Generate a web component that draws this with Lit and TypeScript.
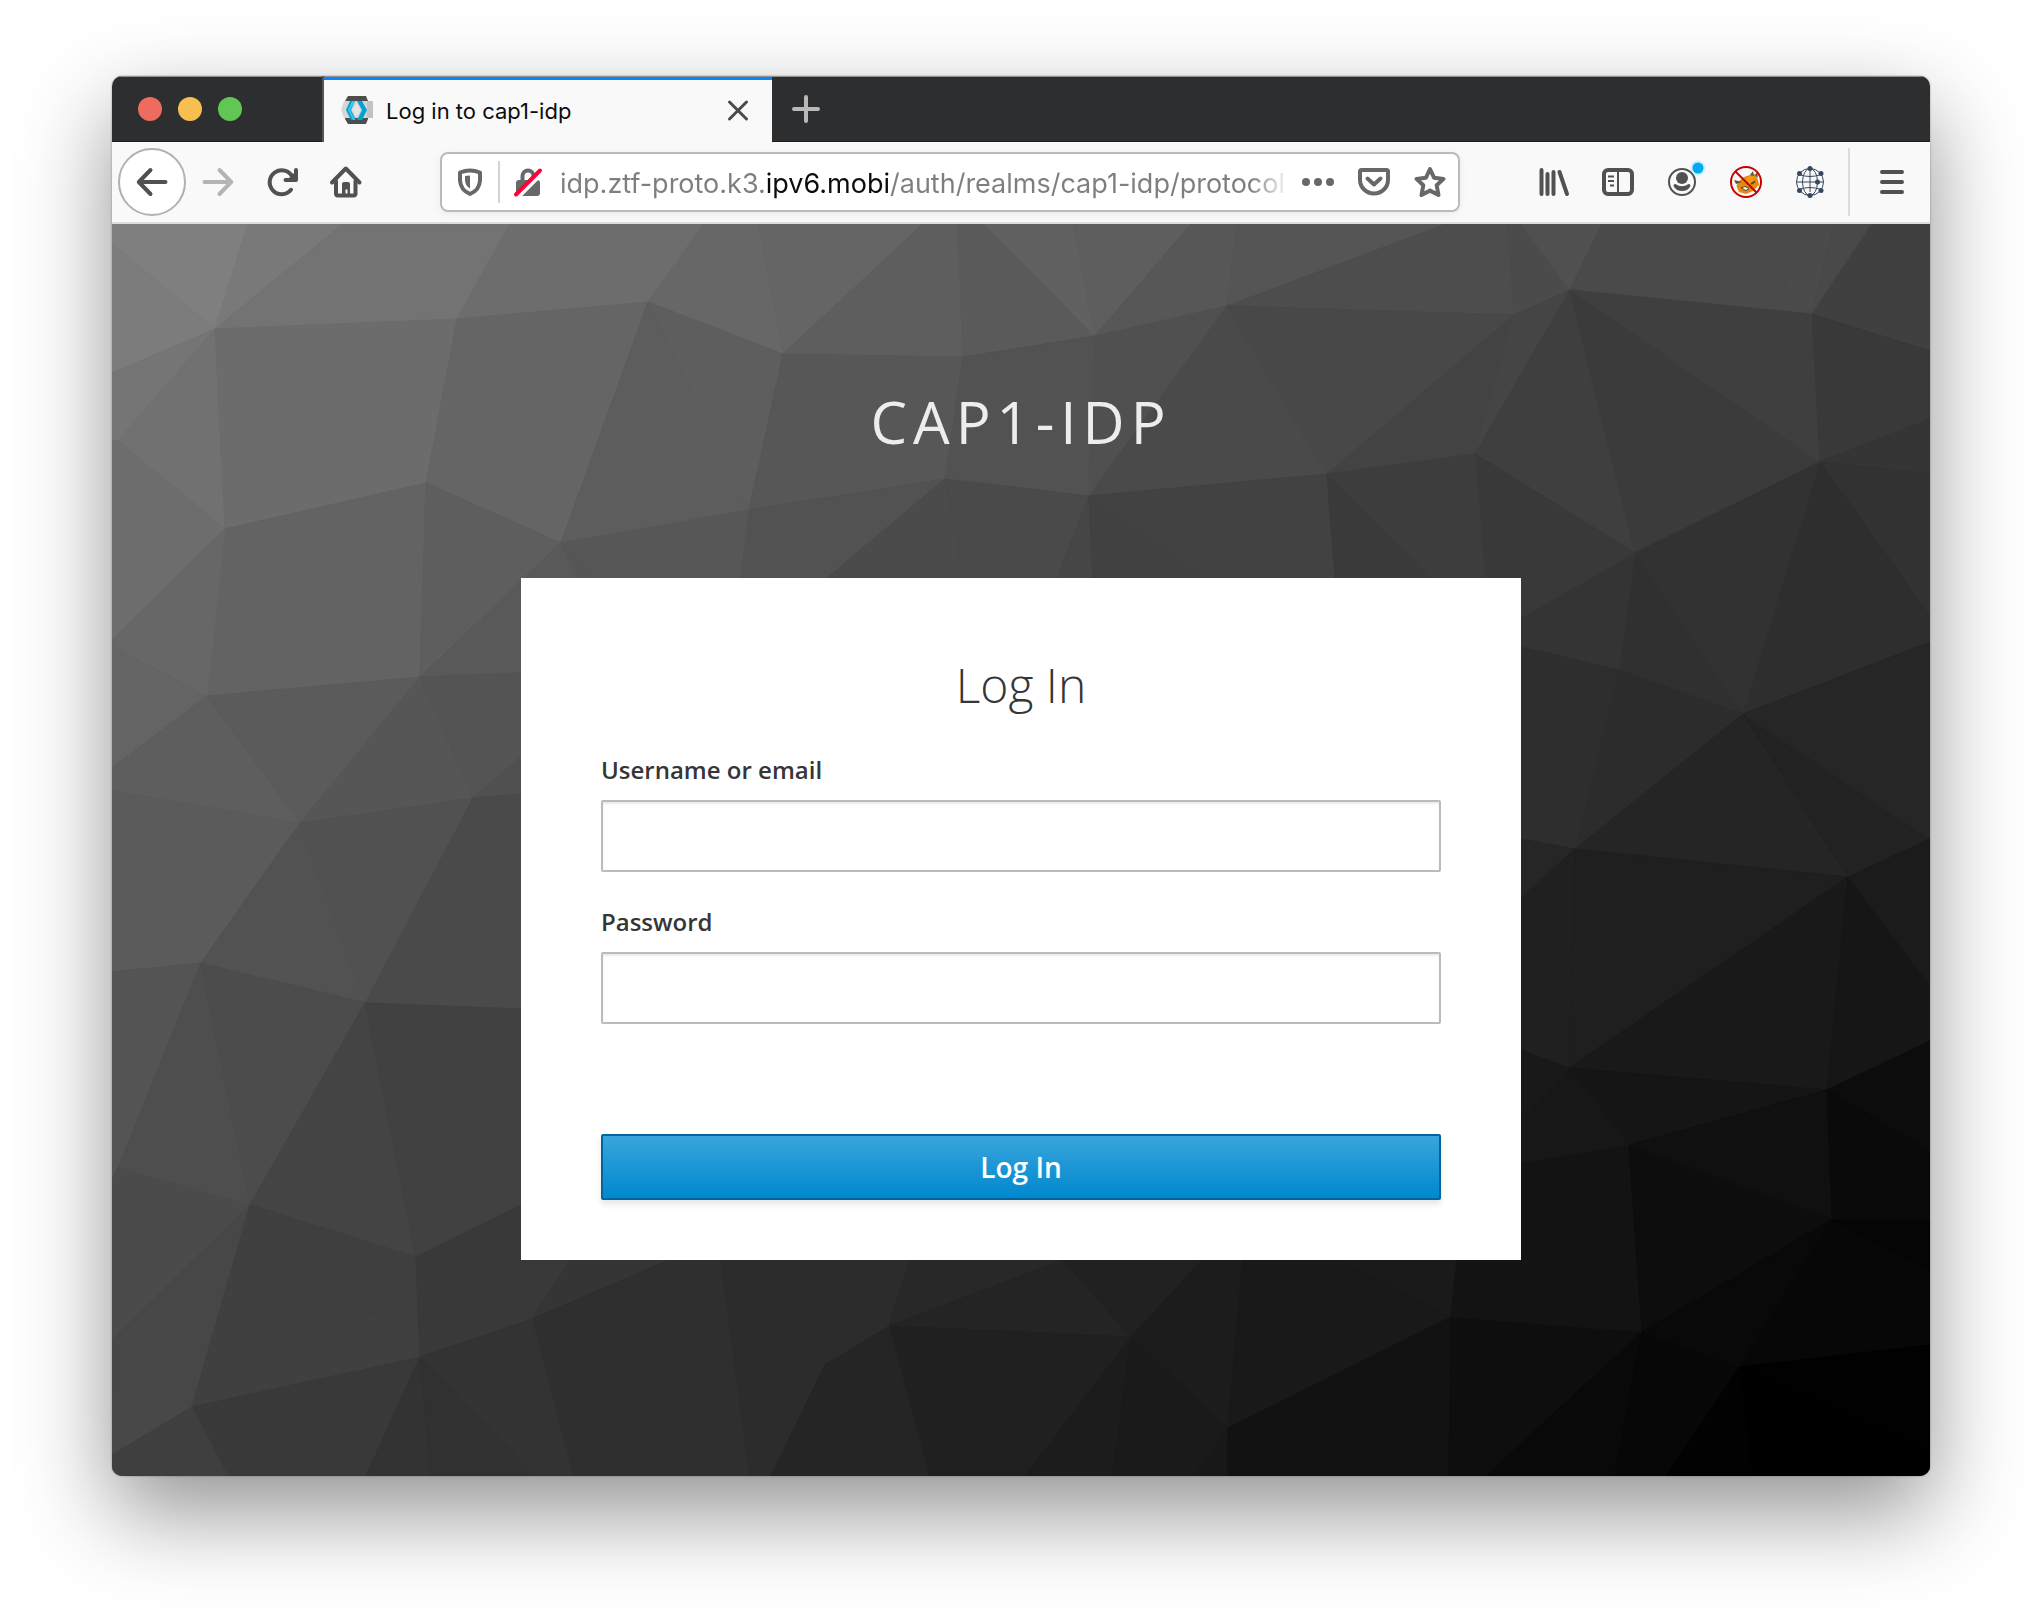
import { LitElement, html, css, svg } from "lit";
import { customElement } from "lit/decorators.js";

/* Facets of the login backdrop: grey level (hex), then the corner points. */
const FACETS = `
7f 0,0 136,0 103,105 0,20
7c 0,20 103,105 0,149
79 136,0 231,0 103,105
73 231,0 398,0 345,95 103,105
6d 398,0 592,0 536,78 345,95
67 592,0 647,0 671,130 536,78
65 647,0 811,0 671,130
5e 811,0 846,0 851,133 671,130
5a 846,0 872,0 983,112 851,133
61 872,0 961,0 983,112
5e 961,0 1079,0 983,112
57 1079,0 1125,0 1115,82 983,112
55 1125,0 1334,0 1115,82
4d 1334,0 1396,0 1402,91 1115,82
4b 1396,0 1409,0 1458,66 1402,91
50 1409,0 1490,0 1458,66
4a 1490,0 1627,0 1700,90 1458,66
4b 1627,0 1721,0 1700,90
49 1721,0 1760,0 1700,90
40 1760,0 1818,0 1818,127 1700,90
75 0,149 103,105 6,217 0,217
71 103,105 113,305 6,217
6d 0,217 6,217 113,305 0,416
6c 103,105 345,95 314,259 113,305
65 345,95 536,78 449,319 314,259
5d 536,78 637,286 449,319
5e 536,78 671,130 637,286
57 671,130 851,133 833,255 637,286
52 851,133 983,112 977,272 833,255
50 983,112 1115,82 977,272
4a 1115,82 1215,250 977,272
48 1115,82 1402,91 1215,250
43 1402,91 1363,230 1215,250
45 1402,91 1458,66 1363,230
3f 1458,66 1523,329 1363,230
3b 1458,66 1708,238 1523,329
3f 1458,66 1700,90 1708,238
39 1700,90 1818,127 1818,195 1708,238
35 1708,238 1818,195 1818,250
32 1708,238 1818,250 1818,392
2e 1708,238 1818,392 1818,418 1631,490
32 1708,238 1631,490 1523,329
30 1523,329 1631,490 1507,446
34 1523,329 1507,446 1409,423 1409,394
39 1363,230 1523,329 1409,394 1373,354
2c 1507,446 1631,490 1463,625
2e 1409,423 1507,446 1463,625 1409,615
25 1631,490 1736,653 1463,625
22 1631,490 1818,615 1736,653
26 1631,490 1818,418 1818,615
63 113,305 314,259 308,453 95,472
67 0,416 113,305 95,472 0,422
64 0,422 95,472 0,544
5e 314,259 449,319 308,453
59 308,453 449,319 464,354 409,449
56 449,319 496,354 464,354
57 449,319 637,286 629,354 496,354
52 637,286 833,255 715,354 629,354
4b 833,255 851,354 715,354
4a 833,255 977,272 945,354 851,354
46 977,272 981,354 945,354
41 977,272 1093,354 981,354
42 977,272 1215,250 1223,354 1093,354
3a 1215,250 1318,354 1223,354
3d 1215,250 1363,230 1373,354 1318,354
5e 0,544 95,472 188,599 0,567
5b 95,472 308,453 188,599
56 308,453 361,574 188,599
54 308,453 409,449 409,533 361,574
50 361,574 409,533 409,570
5b 0,567 188,599 89,739 0,748
52 188,599 253,779 89,739
51 188,599 361,574 253,779
4a 361,574 409,570 409,785 253,779
54 0,748 89,739 6,944 0,955
4e 89,739 138,981 6,944
4c 89,739 253,779 138,981
44 253,779 304,1033 138,981
41 253,779 409,785 409,981 304,1033
4b 6,944 138,981 0,1116 0,955
47 138,981 80,1183 0,1167 0,1116
48 0,1167 80,1183 0,1231
40 138,981 308,1133 80,1183
3f 138,981 304,1033 308,1133
39 304,1033 409,981 458,1036 420,1095 308,1133
35 458,1036 557,1036 420,1095
2f 557,1036 609,1036 638,1252 461,1252 420,1095
2c 609,1036 798,1036 777,1102 713,1141 659,1252 638,1252
28 798,1036 951,1036 777,1102
24 951,1036 1019,1113 777,1102
20 777,1102 1019,1113 913,1252 817,1252
25 777,1102 817,1252 659,1252 713,1141
21 951,1036 1090,1036 1019,1113
1c 1090,1036 1131,1036 1116,1204 1019,1113
19 1131,1036 1226,1036 1339,1093 1116,1204
1a 1226,1036 1345,1036 1339,1093
1c 1019,1113 1001,1252 913,1252
1a 1019,1113 1116,1204 1082,1252 1001,1252
18 1116,1204 1116,1252 1082,1252
12 1116,1204 1339,1093 1337,1252 1116,1252
0e 1339,1093 1530,1108 1374,1252 1337,1252
09 1530,1108 1503,1252 1374,1252
07 1530,1108 1628,1143 1554,1252 1503,1252
13 1345,1036 1409,939 1517,921 1530,1108 1339,1093
0d 1517,921 1720,995 1530,1108
09 1530,1108 1720,995 1628,1143
07 1628,1143 1720,995 1818,1047 1818,1121
05 1720,995 1818,995 1818,1047
01 1628,1143 1818,1121 1818,1226
00 1628,1143 1818,1226 1818,1252 1640,1252
02 1628,1143 1640,1252 1554,1252
26 1463,625 1409,674 1409,615
20 1463,625 1457,844 1409,826 1409,674
1f 1463,625 1736,653 1457,844
19 1736,653 1715,866 1457,844
16 1736,653 1818,761 1818,817 1715,866
1b 1736,653 1818,615 1818,761
15 1457,844 1715,866 1517,921
17 1457,844 1517,921 1409,939 1409,892
19 1409,826 1457,844 1409,892
10 1517,921 1715,866 1720,995
0c 1715,866 1818,817 1818,928
0a 1715,866 1818,928 1818,995 1720,995
39 80,1183 308,1133 254,1252 116,1252
33 308,1133 319,1252 254,1252
31 308,1133 424,1252 319,1252
33 308,1133 420,1095 461,1252 424,1252
3f 0,1231 80,1183 116,1252 0,1252
`
  .trim()
  .split("\n")
  .map((line) => {
    const [grey, ...points] = line.split(" ");
    return { fill: `#${grey}${grey}${grey}`, points: points.join(" ") };
  });

const icon = (body: unknown, cls = "") =>
  html`<svg class="icon ${cls}" viewBox="0 0 32 32" aria-hidden="true">${body}</svg>`;

const ICONS = {
  back: svg`<path class="ln" d="M29.5 16H3M14.5 4 2.800 16l11.700 12"/>`,
  forward: svg`<path class="ln" d="M2.5 16H29M17.5 4 29.200 16 17.500 28"/>`,
  reload: svg`<path class="ln" d="M25 23.800A12 12 0 1 1 26.500 11"/><path class="ln" d="M30 4v10H19.500"/><path class="fl" d="M21 14l9-9v9z"/>`,
  home: svg`<path class="ln" d="M2 16.500 15.800 2.500 29.500 16.500"/><path class="ln" d="M6 15v13a1.500 1.500 0 0 0 1.500 1.500h16.500a1.500 1.500 0 0 0 1.500-1.500V15"/><path class="fl" d="M12 30V18a2 2 0 0 1 2-2h4a2 2 0 0 1 2 2v12h-2.500v-6.500h-2V30z"/>`,
  shield: svg`<path class="ln" d="M6 6.500Q16 2.500 26 6.500V14.500Q25.500 24 16 28Q6.500 24 6 14.500Z"/><path class="fl" d="M16 9.500v13q-4.700-2.500-5-8.500v-4z"/>`,
  lock: svg`<path class="ln" d="M10.500 15V10a5.500 5.500 0 0 1 11 0v5"/><rect class="fl" x="4" y="14" width="24" height="16" rx="3"/><path d="M4 32 31 5" stroke="#fff" stroke-width="6"/><path d="M4 28.500 28 4.500" stroke="#ff0039" stroke-width="4" stroke-linecap="round"/>`,
  dots: svg`<circle class="fl" cx="4" cy="16" r="4"/><circle class="fl" cx="16" cy="16" r="4"/><circle class="fl" cx="28" cy="16" r="4"/>`,
  pocket: svg`<path class="ln" d="M3.500 4h25a1.500 1.500 0 0 1 1.500 1.500V14a14 13.500 0 0 1-28 0V5.500A1.500 1.500 0 0 1 3.500 4z"/><path class="ln" d="M9.500 12.500 16 18.500l6.500-6"/>`,
  star: svg`<path class="ln" d="M16 3l4 8.700 9.500 1.200-6.800 6.400 1.800 9.700L16 24.600 7.500 29l1.800-9.700L2.500 12.900l9.500-1.200z"/>`,
  library: svg`<path class="ln" d="M3.500 4v24M9.500 8v20M15.500 6v22M21.500 6l7.500 22"/>`,
  sidebar: svg`<rect class="ln" x="2" y="4" width="28" height="24" rx="4"/><path d="M16 4v24M6 10.500h6M6 15h6M8 19.500h4" fill="none" stroke="currentColor" stroke-width="2"/>`,
  account: svg`<circle cx="16" cy="16" r="13" fill="none" stroke="currentColor" stroke-width="2"/><circle class="fl" cx="16" cy="12" r="6"/><path class="fl" d="M9.500 18Q16 22.500 22.500 18q2.500 0 1.800 2.500Q21.500 25 16 25t-8.300-4.500Q7 18 9.500 18z"/><circle cx="32" cy="2" r="7.500" fill="#c9effc"/><circle cx="32" cy="2" r="5.500" fill="#00a9f4"/>`,
  fox: svg`<path d="M6.500 20 8 16l6-5 6-2 5-1 3 6 1 5-6 6-7 3-7-2z" fill="#e68a0e"/><path d="M12 15l8-5 6 1-7 8z" fill="#f29a1d"/><path d="M4 14l2 4 6-2zM20 9l3-4 1 5zM25 9l3-4-.500 7z" fill="#555"/><path d="M11 22l4-1.500 4 2-3 2z" fill="#fff" stroke="#444" stroke-width="1"/><path d="M21 18l4-2.500" stroke="#5a4020" stroke-width="1.500"/><circle cx="16" cy="16" r="15" fill="none" stroke="#c80000" stroke-width="2"/><path d="M5.500 5.500l21 21" stroke="#c80000" stroke-width="2"/>`,
  globe: svg`<g fill="none" stroke="#34495e" stroke-width="1"><circle cx="16" cy="16" r="13.500"/><ellipse cx="16" cy="16" rx="7.500" ry="13.500"/><path d="M16 3v23M2.500 16h27M5 8.500Q16 12.500 27 8.500M5 23.500Q16 19.500 27 23.500"/></g><g fill="#34495e"><circle cx="16" cy="2.500" r="2.500"/><circle cx="16" cy="29.500" r="2.500"/><circle cx="5.500" cy="7.500" r="2.500"/><circle cx="27" cy="7.500" r="2.500"/><circle cx="5.500" cy="24.500" r="2.500"/><circle cx="27" cy="24.500" r="2.500"/><circle cx="23.500" cy="16" r="2.500"/></g>`,
  menu: svg`<path class="ln" d="M6 6h20M6 16h20M6 26h20"/>`,
  close: svg`<path d="M7.500 7l17 17M24.500 7l-17 17" fill="none" stroke="currentColor" stroke-width="3" stroke-linecap="round"/>`,
  plus: svg`<path class="ln" d="M16 4v24M4 16h24"/>`,
  favicon: svg`<path d="M6 1h18l2 5v18l-2 5H6l-3-5V6z" fill="#4d4d4d"/><path d="M2 6h29v17H2L-1 15z" fill="#d6d6d6"/><path d="M25 6h6v17h-6z" fill="#c2c2c2"/><path d="M8 6h5L9 15l5 10H9L4 15zM20 6h-5l5 9-5 10h5l5-10z" fill="#00a3d3"/><path d="M10 6h3L8 15l5 10h-2L6 15z" fill="#3cc8ea"/><path d="M14.500 8l4 7-4 7-4-7z" fill="#e6e6e6"/>`,
};

@customElement("login-page")
export class LoginPage extends LitElement {
  static styles = css`
    :host {
      display: flex;
      flex: 1;
      flex-direction: column;
      align-items: center;
      position: relative;
      overflow: hidden;
      padding: 158px 40px 216px;
      background: #333;
      color: #363636;
      font-family: "Open Sans", "Liberation Sans", sans-serif;
    }
    * {
      box-sizing: border-box;
    }
    .backdrop {
      position: absolute;
      inset: 0;
      width: 100%;
      height: 100%;
    }
    .realm {
      position: relative;
      margin: 0 0 116px;
      color: #ededed;
      font-size: 58px;
      font-weight: 400;
      line-height: 80px;
      letter-spacing: 6px;
      text-transform: uppercase;
    }
    .card {
      position: relative;
      width: 100%;
      max-width: 1000px;
      padding: 75px 80px 60px;
      background: #fff;
    }
    .heading {
      margin: 0 0 35px;
      font-size: 48px;
      font-weight: 300;
      line-height: 64px;
      text-align: center;
    }
    .form {
      display: flex;
      flex-direction: column;
    }
    .label {
      margin-bottom: 12px;
      font-size: 24px;
      font-weight: 600;
      line-height: 36px;
    }
    .field {
      width: 100%;
      height: 72px;
      margin: 0 0 32px;
      padding: 4px 20px;
      border: 2px solid #bbb;
      border-radius: 2px;
      outline: none;
      background: #fff;
      box-shadow: inset 0 2px 2px rgba(3, 3, 3, 0.08);
      font: 400 28px "Open Sans", sans-serif;
    }
    .submit {
      height: 66px;
      margin-top: 78px;
      border: 2px solid #00659c;
      border-radius: 2px;
      background: linear-gradient(#39a5dc, #0088ce);
      box-shadow: 0 4px 6px rgba(3, 3, 3, 0.1);
      color: #fff;
      font: 600 28px/40px "Open Sans", sans-serif;
    }
  `;

  render() {
    return html`
      <svg class="backdrop" viewBox="0 0 1818 1252" preserveAspectRatio="xMidYMid slice" aria-hidden="true">
        ${FACETS.map((f) => svg`<polygon points=${f.points} fill=${f.fill} stroke=${f.fill} stroke-width="1"/>`)}
      </svg>
      <div class="realm">cap1-idp</div>
      <main class="card">
        <h1 class="heading">Log In</h1>
        <form class="form" @submit=${(e: Event) => e.preventDefault()}>
          <label class="label" for="username">Username or email</label>
          <input class="field" id="username" type="text" />
          <label class="label" for="password">Password</label>
          <input class="field" id="password" type="password" />
          <button class="submit" type="submit">Log In</button>
        </form>
      </main>
    `;
  }
}

@customElement("app-root")
export class AppRoot extends LitElement {
  static styles = css`
    :host {
      display: flex;
      box-sizing: border-box;
      min-height: 100vh;
      padding: 76px 112px 148px;
      background: #fff;
      font-family: Inter, "Liberation Sans", sans-serif;
    }
    * {
      box-sizing: border-box;
    }
    button {
      padding: 0;
      border: 0;
      background: none;
      color: inherit;
    }
    .window {
      display: flex;
      flex: 1;
      flex-direction: column;
      min-width: 0;
      overflow: hidden;
      border-radius: 10px;
      background: #f9f9fa;
      box-shadow: 0 0 2px rgba(0, 0, 0, 0.4), 0 36px 90px rgba(0, 0, 0, 0.43);
    }
    .tabs {
      display: flex;
      height: 66px;
      background: #2d2e30;
      box-shadow: inset 0 1px #8f9090, inset 0 -1px #1d1d1f;
      color: #b9b9ba;
    }
    .lights {
      display: flex;
      align-items: center;
      gap: 16px;
      width: 212px;
      padding-left: 26px;
      border-right: 2px solid #545557;
    }
    .light {
      width: 24px;
      height: 24px;
      border-radius: 50%;
    }
    .red {
      background: #ee6b60;
    }
    .amber {
      background: #f6bf50;
    }
    .green {
      background: #62c655;
    }
    .tab {
      display: flex;
      align-items: center;
      gap: 12px;
      width: 448px;
      margin-top: 1px;
      padding: 0 18px;
      border-top: 3px solid #0a84ff;
      background: #f9f9fa;
      color: #0c0c0d;
      font-size: 22px;
      line-height: 28px;
    }
    .title {
      flex: 1;
    }
    .tab-close {
      display: flex;
      color: #4a4a4b;
    }
    .new-tab {
      display: flex;
      align-items: center;
      justify-content: center;
      width: 68px;
    }
    .icon {
      display: block;
      width: 32px;
      height: 32px;
      overflow: visible;
    }
    .ln {
      fill: none;
      stroke: currentColor;
      stroke-width: 4;
      stroke-linecap: round;
      stroke-linejoin: round;
    }
    .fl {
      fill: currentColor;
    }
    .toolbar {
      display: flex;
      align-items: center;
      height: 82px;
      padding: 0 6px;
      border-bottom: 2px solid #dcdcdc;
      color: #515152;
    }
    .tool {
      display: flex;
      align-items: center;
      justify-content: center;
      width: 64px;
      height: 64px;
    }
    .round {
      width: 68px;
      height: 68px;
      border: 2px solid #b1b1b1;
      border-radius: 50%;
      background: #fff;
    }
    .dim {
      color: #b4b4b5;
    }
    .address {
      display: flex;
      flex: 1;
      align-items: center;
      min-width: 0;
      height: 60px;
      margin: 0 62px;
      border: 2px solid #bbb;
      border-radius: 8px;
      background: #fff;
      box-shadow: 0 2px 8px rgba(0, 0, 0, 0.06);
      color: #686869;
    }
    .chip {
      display: flex;
      align-items: center;
      justify-content: center;
      width: 56px;
      height: 56px;
    }
    .sep {
      width: 2px;
      height: 42px;
      background: #d4d4d4;
    }
    .url {
      flex: 1;
      min-width: 0;
      height: 56px;
      padding: 2px 0 0 4px;
      border: 0;
      outline: none;
      background: linear-gradient(90deg, #7e7e7e 209px, #0c0c0d 209px, #0c0c0d 335px, #7e7e7e 335px) text;
      -webkit-text-fill-color: transparent;
      -webkit-mask-image: linear-gradient(90deg, #000 calc(100% - 40px), transparent);
      mask-image: linear-gradient(90deg, #000 calc(100% - 40px), transparent);
      font: 400 27px Inter, "Liberation Sans", sans-serif;
    }
    .rule {
      width: 2px;
      height: 68px;
      margin: 0 10px 0 6px;
      background: #dcdcdc;
    }
  `;

  render() {
    return html`
      <div class="window">
        <div class="tabs">
          <div class="lights">
            <button class="light red" aria-label="Close window"></button>
            <button class="light amber" aria-label="Minimise window"></button>
            <button class="light green" aria-label="Zoom window"></button>
          </div>
          <div class="tab">
            ${icon(ICONS.favicon)}
            <span class="title">Log in to cap1-idp</span>
            <button class="tab-close" aria-label="Close tab">${icon(ICONS.close)}</button>
          </div>
          <button class="new-tab" aria-label="New tab">${icon(ICONS.plus)}</button>
        </div>
        <div class="toolbar">
          <button class="tool round" aria-label="Back">${icon(ICONS.back)}</button>
          <button class="tool dim" aria-label="Forward">${icon(ICONS.forward)}</button>
          <button class="tool" aria-label="Reload">${icon(ICONS.reload)}</button>
          <button class="tool" aria-label="Home">${icon(ICONS.home)}</button>
          <div class="address">
            <button class="chip" aria-label="Tracking protection">${icon(ICONS.shield)}</button>
            <span class="sep"></span>
            <button class="chip" aria-label="Connection not secure">${icon(ICONS.lock)}</button>
            <input class="url" type="text" aria-label="Address" value="idp.ztf-proto.k3.ipv6.mobi/auth/realms/cap1-idp/protocol" />
            <button class="chip" aria-label="Page actions">${icon(ICONS.dots)}</button>
            <button class="chip" aria-label="Save to Pocket">${icon(ICONS.pocket)}</button>
            <button class="chip" aria-label="Bookmark">${icon(ICONS.star)}</button>
          </div>
          <button class="tool" aria-label="Library">${icon(ICONS.library)}</button>
          <button class="tool" aria-label="Sidebars">${icon(ICONS.sidebar)}</button>
          <button class="tool" aria-label="Account">${icon(ICONS.account)}</button>
          <button class="tool" aria-label="Fox extension">${icon(ICONS.fox)}</button>
          <button class="tool" aria-label="Network extension">${icon(ICONS.globe)}</button>
          <span class="rule"></span>
          <button class="tool" aria-label="Menu">${icon(ICONS.menu)}</button>
        </div>
        <login-page></login-page>
      </div>
    `;
  }
}
